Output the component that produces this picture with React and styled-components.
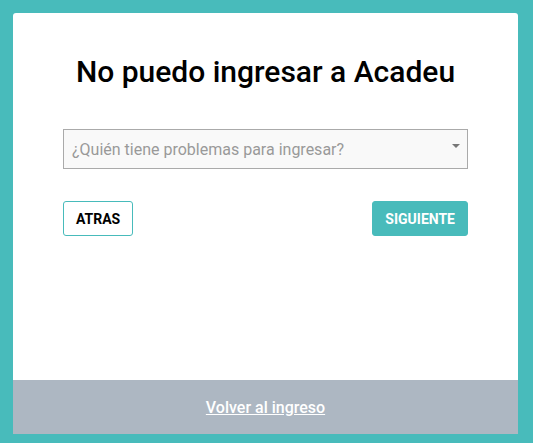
import React from 'react';
import styled, { createGlobalStyle } from 'styled-components';

const GlobalStyle = createGlobalStyle`
  html, body {
    margin: 0;
    padding: 0;
    background: #48bbbb;
  }
  body {
    font-family: Roboto, "Liberation Sans", sans-serif;
  }
`;

const Page = styled.div`
  width: 533px;
  height: 443px;
  box-sizing: border-box;
  padding: 13px 15px 9px 13px;
  background: #48bbbb;
`;

const Card = styled.div`
  height: 100%;
  display: flex;
  flex-direction: column;
  background: #fff;
  border-radius: 3px 3px 0 0;
  overflow: hidden;
`;

const Body = styled.div`
  flex: 1;
  padding: 0 50px;
`;

const Title = styled.h1`
  margin: 41px 0 0;
  text-align: center;
  font-size: 30px;
  font-weight: 500;
  line-height: 36px;
  color: #000;
`;

const SelectBox = styled.div`
  margin-top: 39px;
  height: 40px;
  box-sizing: border-box;
  border: 1px solid #aaaaaa;
  background: #f9f9f9;
  display: flex;
  align-items: center;
  justify-content: space-between;
  padding: 0 7px 0 8px;
`;

const Placeholder = styled.span`
  font-size: 16px;
  color: #999;
`;

const Caret = styled.span`
  width: 0;
  height: 0;
  border-left: 4px solid transparent;
  border-right: 4px solid transparent;
  border-top: 4px solid #777;
  margin-top: -6px;
`;

const Actions = styled.div`
  margin-top: 32px;
  display: flex;
  justify-content: space-between;
`;

const Button = styled.button`
  height: 35px;
  box-sizing: border-box;
  padding: 0 12px;
  border-radius: 3px;
  border: 1px solid #48bbbb;
  background: ${(p) => (p.$primary ? '#48bbbb' : '#fff')};
  color: ${(p) => (p.$primary ? '#fff' : '#000')};
  font-family: Roboto, "Liberation Sans", sans-serif;
  font-size: 14px;
  font-weight: 700;
  cursor: pointer;
`;

const Footer = styled.div`
  height: 54px;
  background: #adb7c2;
  display: flex;
  align-items: center;
  justify-content: center;
`;

const FooterLink = styled.a`
  color: #fff;
  font-size: 16px;
  font-weight: 500;
  text-decoration: underline;
  cursor: pointer;
`;

export default function App() {
  return (
    <Page>
      <GlobalStyle />
      <Card>
        <Body>
          <Title>No puedo ingresar a Acadeu</Title>
          <SelectBox>
            <Placeholder>¿Quién tiene problemas para ingresar?</Placeholder>
            <Caret />
          </SelectBox>
          <Actions>
            <Button>ATRAS</Button>
            <Button $primary>SIGUIENTE</Button>
          </Actions>
        </Body>
        <Footer>
          <FooterLink>Volver al ingreso</FooterLink>
        </Footer>
      </Card>
    </Page>
  );
}
